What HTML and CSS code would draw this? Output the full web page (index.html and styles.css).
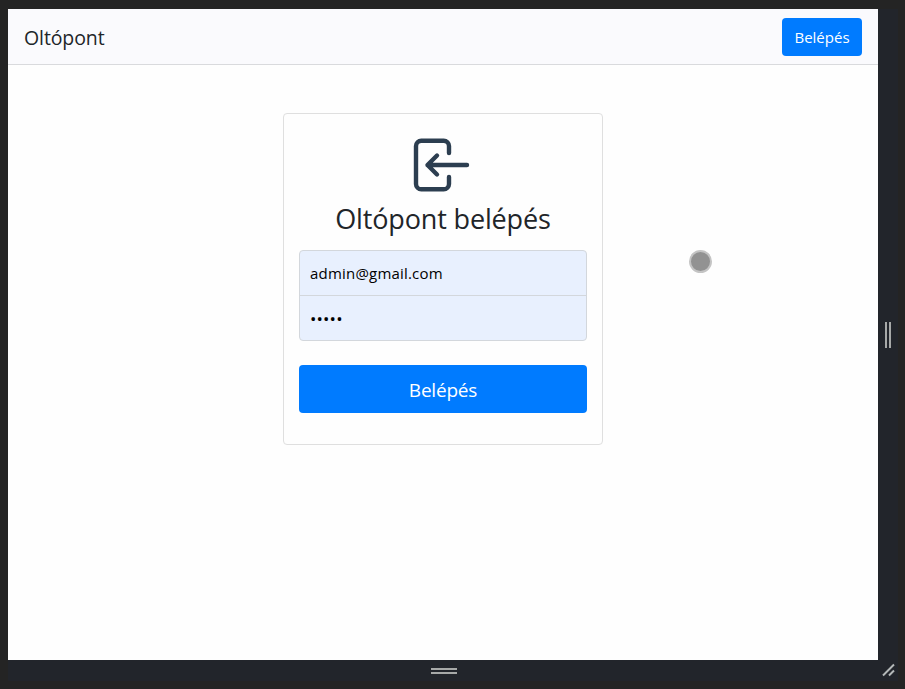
FILE: index.html
```html
<!DOCTYPE html>
<html lang="hu">
<head>
<meta charset="utf-8">
<title>Oltópont</title>
<link rel="stylesheet" href="styles.css">
</head>
<body>
<div class="viewport">
  <header class="navbar">
    <span class="brand">Oltópont</span>
    <button class="btn btn-nav" type="button">Belépés</button>
  </header>
  <main class="content">
    <form class="card">
      <svg class="icon" viewBox="0 0 72 72" aria-hidden="true">
        <path d="M42 24v-7a5.3 5.3 0 0 0-5.3-5.3H14.3A5.3 5.3 0 0 0 9 17v38a5.3 5.3 0 0 0 5.3 5.3h22.4A5.3 5.3 0 0 0 42 55v-7M60 36H20.500l9.5-9.500M20.500 36l9.500 9.500"/>
      </svg>
      <h1 class="title">Oltópont belépés</h1>
      <div class="fields">
        <div class="field">admin@gmail.com</div>
        <div class="field password">•••••</div>
      </div>
      <button class="btn btn-submit" type="button">Belépés</button>
    </form>
  </main>
</div>
<div class="handle handle-right"></div>
<div class="handle handle-bottom"></div>
<svg class="corner" viewBox="0 0 14 14" aria-hidden="true"><path d="M1 12.500L12 1.500M7 12.500L12 7.500"/></svg>
<div class="touch"></div>
</body>
</html>
```
FILE: styles.css
```css
* { box-sizing: border-box; }
body {
  margin: 0;
  width: 905px;
  height: 689px;
  overflow: hidden;
  display: grid;
  grid-template-columns: 870px 20px;
  grid-template-rows: 651px 21px;
  padding: 9px 0 0 8px;
  background: #242424;
  font-family: "Open Sans", "Noto Sans", sans-serif;
  color: #212529;
}
.viewport {
  background: #fefefe;
  box-shadow: 0 21px 0 #22252b, 20px 0 0 #22252b, 20px 21px 0 #22252b;
}
.navbar {
  height: 56px;
  padding: 0 16px;
  display: flex;
  align-items: center;
  justify-content: space-between;
  background: #fafafd;
  border-bottom: 1px solid #d9dadd;
}
.brand { font-size: 19.5px; line-height: 30px; letter-spacing: -0.1px; padding-top: 3px; }
.btn {
  border: 0;
  border-radius: 4px;
  background: #007bff;
  color: #fff;
  font-family: inherit;
  padding: 0;
}
.btn-nav { width: 80px; height: 38px; font-size: 15px; }
.content { display: flex; justify-content: center; padding-top: 48px; }
.card {
  width: 320px;
  height: 332px;
  padding: 15px;
  border: 1px solid #dfdfdf;
  border-radius: 4px;
  display: flex;
  flex-direction: column;
  align-items: center;
}
.icon { width: 72px; height: 72px; flex: none; }
.icon path {
  fill: none;
  stroke: #2c3e50;
  stroke-width: 4.4;
  stroke-linecap: round;
  stroke-linejoin: round;
}
.title {
  margin: 1px 0 14px;
  font-size: 27px;
  font-weight: 400;
  line-height: 34px;
  letter-spacing: -0.15px;
  white-space: nowrap;
}
.fields {
  width: 288px;
  height: 91px;
  border: 1px solid #d3d7dc;
  border-radius: 4px;
  background: #e8f0fe;
  overflow: hidden;
}
.field {
  height: 44px;
  padding: 0 10px;
  display: flex;
  align-items: center;
  font-size: 15px;
  letter-spacing: 0.2px;
  color: #000;
}
.field + .field { height: 45px; border-top: 1px solid #d3d7dc; }
.password { font-size: 17px; letter-spacing: 0.15px; }
.btn-submit {
  width: 288px;
  height: 48px;
  margin-top: 24px;
  padding-top: 2px;
  font-size: 19px;
  letter-spacing: -0.2px;
}
.handle { place-self: center; border: solid #a7a9a8; }
.handle-right { width: 6px; height: 26px; border-width: 0 2px; }
.handle-bottom { width: 26px; height: 6px; margin-left: 2px; border-width: 2px 0; }
.handle, .corner { position: relative; }
.corner { width: 14px; height: 14px; place-self: center; margin-left: 2px; margin-bottom: 2px; }
.corner path { fill: none; stroke: #b4b8b8; stroke-width: 2; }
.touch {
  position: absolute;
  left: 689px;
  top: 250px;
  width: 23px;
  height: 23px;
  border: 2px solid #c4c4c4;
  border-radius: 50%;
  background: #929292;
}
```
